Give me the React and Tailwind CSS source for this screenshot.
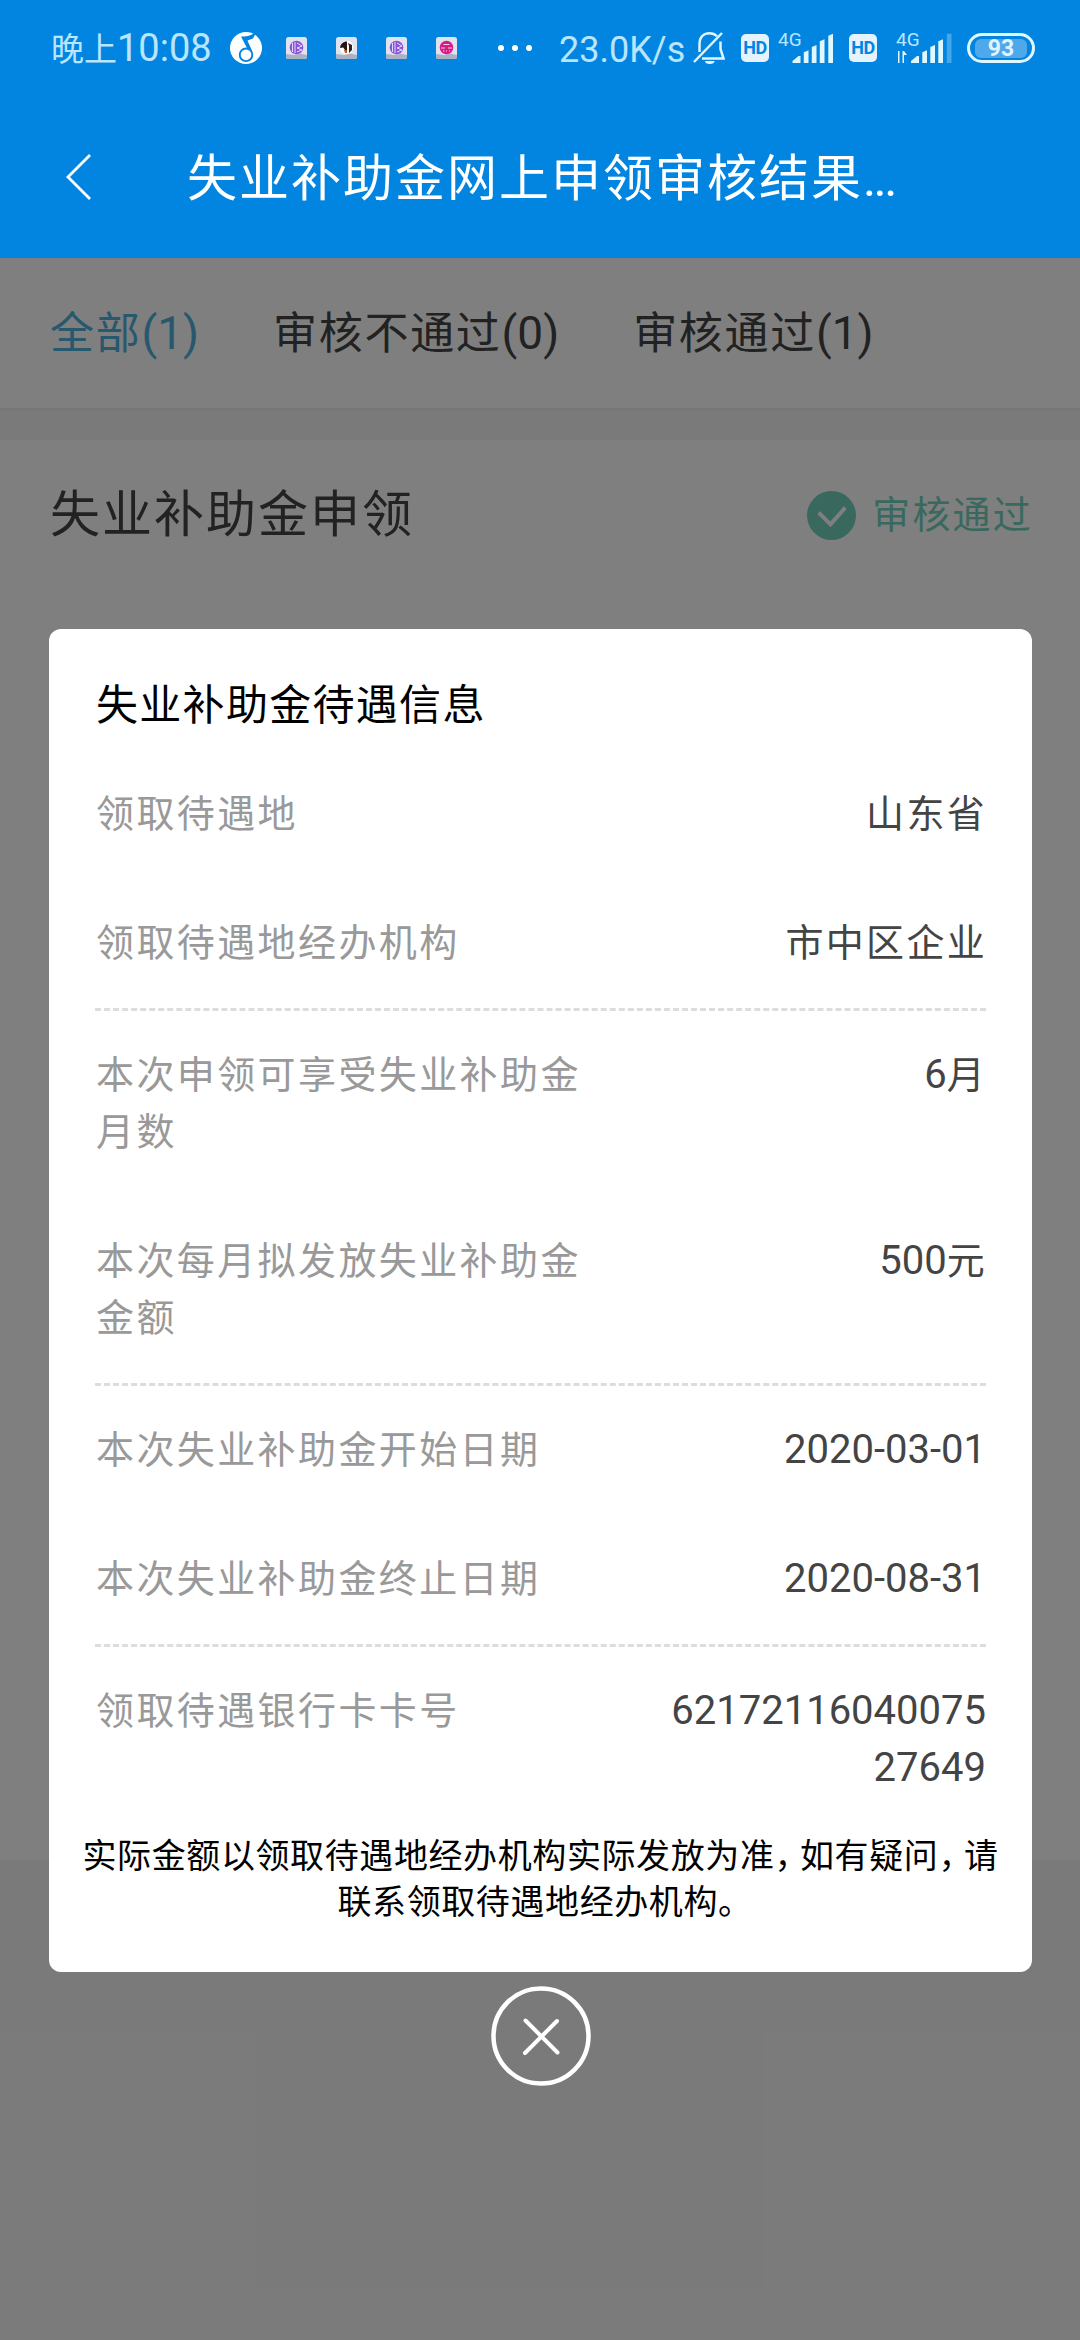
import React, { useState } from 'react';
import clsx from 'clsx';

const TABS = [
  { label: '全部', count: 1 },
  { label: '审核不通过', count: 0 },
  { label: '审核通过', count: 1 },
];

// รายการแบ่งเป็นกลุ่ม คั่นด้วยเส้นประ
const GROUPS = [
  [
    { label: '领取待遇地', value: '山东省' },
    { label: '领取待遇地经办机构', value: '市中区企业' },
  ],
  [
    { label: '本次申领可享受失业补助金月数', number: '6', value: '月' },
    { label: '本次每月拟发放失业补助金金额', number: '500', value: '元' },
  ],
  [
    { label: '本次失业补助金开始日期', number: '2020-03-01' },
    { label: '本次失业补助金终止日期', number: '2020-08-31' },
  ],
  [{ label: '领取待遇银行卡卡号', number: '6217211604007527649' }],
];

const MusicIcon = () => (
  <svg className="h-8 w-8 shrink-0" viewBox="0 0 32 32">
    <circle cx="16" cy="16" r="16" fill="#fff" />
    <path d="M26.500 0L23 6.500l-5.500 2 5 11.500-4.500-2L11 4.500C16 5 22 3 24.500 1Z" fill="#0285e1" />
    <circle cx="16" cy="22.800" r="6.300" fill="#fff" stroke="#0285e1" strokeWidth="1.900" />
  </svg>
);

const AppBadge = ({ children }) => (
  <svg className="h-[22px] w-[21px]" viewBox="0 0 21 22">
    <rect width="21" height="22" rx="2.500" fill="#dfe3ef" />
    <path d="M0 17l8 1 6-1.500 7 1.500v1.500a2.500 2.500 0 0 1-2.500 2.500h-16A2.500 2.500 0 0 1 0 19.500Z" fill="#a9b3c4" />
    {children}
  </svg>
);

const VideoBadge = () => (
  <AppBadge>
    <circle cx="10.500" cy="10.500" r="6.800" fill="#8a52d8" />
    <path d="M6.500 6v9M9 5v11M11 6l5 3-5 2 5 2-5 2" fill="none" stroke="#e6dcfa" />
  </AppBadge>
);

const BellOffIcon = () => (
  <svg className="h-[34px] w-8 shrink-0" viewBox="0 0 32 34" fill="none" stroke="#dff4ff" strokeWidth="2.500">
    <path d="M6.500 21v-8C6.500 5.500 11 2.200 16.500 2.200c3 0 5.500 1 7.500 3M27.500 10.500V18l3 9.500H9" />
    <path d="M1 31L29 2" />
    <path d="M12 30h9.500a4.750 3 0 0 1-9.500 0Z" fill="#dff4ff" stroke="none" />
  </svg>
);

const HdBadge = () => (
  <span className="flex h-7 w-7 shrink-0 items-center justify-center rounded-[5px] bg-[#e4f3fe] text-[18px] leading-none font-bold tracking-[-0.500px] text-[#0285e1]">
    HD
  </span>
);

const BARS = [
  [11.3, 12.7],
  [19.3, 18],
  [27.3, 23.7],
  [35.8, 29.3],
];

const Bars = ({ weak }) => (
  <>
    <path d="M0 30v-2l6-5h2v7Z" />
    {BARS.map(([x, h], i) => {
      const faded = weak && i === 3;
      return <path key={x} d={`M${x} 30v-${faded ? h : h - 2}l4.700-${faded ? 0 : 2}V30Z`} opacity={faded ? 0.3 : 1} />;
    })}
  </>
);

const Signal = ({ weak }) => (
  <svg className={clsx('h-[30px] shrink-0 overflow-visible', weak ? 'w-[57px]' : 'w-[55px]')} viewBox={weak ? '0 0 57 30' : '0 0 55 30'} fill="#dff7ff">
    <text x={weak ? 2 : 0} y="12.500" fontSize="19" fill="#b9e6ff">4G</text>
    {weak && <path d="M1 26l3 4V18h1.500v12H4M8.500 30V18h1.500l3 4h-3v8Z" />}
    <g transform={weak ? 'translate(17 0)' : 'translate(14.500 0)'}>
      <Bars weak={weak} />
    </g>
  </svg>
);

const StatusBar = () => (
  <div className="flex h-24 items-center pl-[51px] text-[38px] text-[#b9e6ff]">
    <span className="w-[162px] shrink-0 pt-px whitespace-nowrap">
      <span className="text-[33px]">晚上</span>10:08
    </span>
    <div className="ml-[17px] flex shrink-0 items-center">
      <MusicIcon />
      <div className="ml-6 flex gap-[29px]">
        <VideoBadge />
        <AppBadge>
          <circle cx="10.500" cy="10.500" r="6.800" fill="#fff" />
          <path d="M9.500 4.500C6 5.500 4 8 4.200 11l3-.5 1.800 2.500h2V4.500Z" fill="#231815" />
          <path d="M12 6l4 2v5l-3 3V9Z" fill="#3a1c18" />
          <path d="M8 13h3v3H9Z" fill="#c9501f" />
        </AppBadge>
        <VideoBadge />
        <AppBadge>
          <circle cx="10.500" cy="10.500" r="6.800" fill="#d81b83" />
          <path d="M7.500 7.500h6M5 11h4M12 11h4M7 14h1.500M10 14h1M13 14h1" stroke="#fbd3e8" strokeWidth="1.200" />
        </AppBadge>
      </div>
      <div className="ml-[41px] flex gap-2">
        <i className="size-1.5 rounded-full bg-white" />
        <i className="size-1.5 rounded-full bg-white" />
        <i className="size-1.5 rounded-full bg-white" />
      </div>
    </div>
    <span className="ml-[27px] w-[134px] shrink-0 pt-[3px] text-[36px] whitespace-nowrap">23.0K/s</span>
    <BellOffIcon />
    <div className="ml-4 flex shrink-0 items-center">
      <HdBadge />
      <div className="ml-[9px]"><Signal /></div>
      <div className="ml-4"><HdBadge /></div>
      <div className="ml-[17px]"><Signal weak /></div>
      {/* battery */}
      <div className="ml-4 flex h-[30px] w-[68px] items-center justify-center rounded-full border-[3px] border-[#dff7ff]">
        <span className="flex h-[19px] w-[52px] items-center justify-center rounded-md bg-white/30 text-[23px] leading-none font-bold text-[#dff4ff]">93</span>
      </div>
    </div>
  </div>
);

const Header = () => (
  <header className="h-[258px] bg-[#0285e1]">
    <StatusBar />
    <div className="flex h-[162px] items-center pl-[66px]">
      <svg className="h-[46px] w-[25px] shrink-0" viewBox="0 0 25 46" fill="none" stroke="#fff" strokeWidth="2.800">
        <path d="M24 1L2 23l22 22" />
      </svg>
      <h1 className="ml-24 pt-[5px] text-[50px] tracking-[2px] whitespace-nowrap text-white">
        失业补助金网上申领审核结果<span className="tracking-[-2.600px]">...</span>
      </h1>
    </div>
  </header>
);

const InfoRow = ({ label, number, value }) => (
  <div className="flex justify-between py-9 text-[38px] leading-[57px]">
    <span className="w-[500px] pl-px tracking-[2.400px] text-[#999]">{label}</span>
    <span className="w-[320px] text-right break-all text-[#444]">
      {number && <span className="text-[40px] leading-10">{number}</span>}
      {value && <span className="-mr-px tracking-[2.300px]">{value}</span>}
    </span>
  </div>
);

// เครื่องหมายวรรคตอนแบบครึ่งความกว้าง
const Punct = ({ children }) => (
  <span className="tracking-[8.500px] [font-feature-settings:'halt']">{children}</span>
);

const App = () => {
  const [activeTab, setActiveTab] = useState(0);
  const [open, setOpen] = useState(true);

  return (
    <main className="relative h-[2340px] w-[1080px] overflow-hidden bg-[#f5f5f5] font-[Roboto,'Noto_Sans_CJK_SC',sans-serif]">
      <Header />
      <nav className="flex h-[153px] gap-[74px] border-b-[3px] border-[#eee] bg-white pl-[50px] text-[46px]">
        {TABS.map((tab, i) => (
          <button
            key={tab.label}
            onClick={() => setActiveTab(i)}
            className={clsx('whitespace-nowrap', activeTab === i ? 'text-[#51b0dc]' : 'text-[#444]')}
          >
            <span className="text-[44px] tracking-[1.700px]">{tab.label}</span>({tab.count})
          </button>
        ))}
      </nav>

      <section className="mt-[29px] h-[1420px] bg-white pt-[38px] pr-[47px] pl-[50px]">
        <div className="flex items-center justify-between">
          <h2 className="text-[50px] tracking-[2px] text-[#444]">失业补助金申领</h2>
          <div className="flex items-center gap-4 text-[38px] tracking-[2.200px] text-[#72d2bd]">
            <svg className="size-[49px]" viewBox="0 0 50 50" fill="none">
              <circle cx="25" cy="25" r="25" fill="#72d2bd" />
              <path d="M12 22l12 12 15-17" stroke="#fff" strokeWidth="4" />
            </svg>
            审核通过
          </div>
        </div>
      </section>

      {open && (
        <div className="absolute inset-x-0 top-[258px] bottom-0 bg-black/50 pt-[371px] pr-12 pl-[49px]">
          <div className="h-[1343px] rounded-xl bg-white px-[46px] pt-[45px]">
            <h3 className="mb-[13px] pl-px text-[42px] leading-[63px] tracking-[1.300px] text-black">失业补助金待遇信息</h3>
            {GROUPS.map((rows, i) => (
              <div key={i} className={clsx(i > 0 && 'border-t-[3px] border-dashed border-[#ddd]')}>
                {rows.map((row) => (
                  <InfoRow key={row.label} {...row} />
                ))}
              </div>
            ))}
            <p className="-mx-5 text-center text-[34px] leading-[46px] tracking-[0.600px] text-black">
              实际金额以领取待遇地经办机构实际发放为准<Punct>，</Punct>如有疑问<Punct>，</Punct>请联系领取待遇地经办机构<Punct>。</Punct>
            </p>
          </div>
          <button onClick={() => setOpen(false)} className="mx-auto mt-[14px] block">
            <svg className="size-[100px]" viewBox="0 0 100 100" fill="none" stroke="#fff" strokeWidth="4.500">
              <circle cx="50" cy="50" r="47.500" />
              <path d="M34.500 34.500l32 32M66 35L34 67" strokeLinecap="round" strokeWidth="4" />
            </svg>
          </button>
        </div>
      )}
    </main>
  );
};

export default App;
